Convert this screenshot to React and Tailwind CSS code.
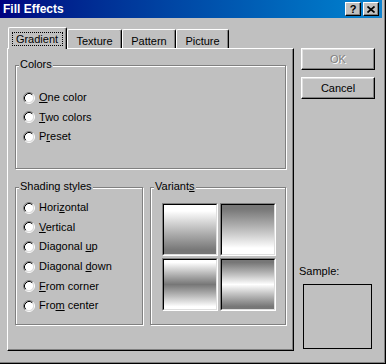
import React from 'react'

const Radio = ({ children }) => (
    <div className="flex items-center h-[19.6px]">
        <svg width="12" height="12" viewBox="0 0 12 12" className="shrink-0">
            <circle cx="6" cy="6" r="4.5" fill="#fff" />
            <path d="M2.11 9.89A5.5 5.5 0 0 1 9.89 2.11" fill="none" stroke="#808080" />
            <path d="M9.89 2.11A5.5 5.5 0 0 1 2.11 9.89" fill="none" stroke="#fff" />
            <path d="M2.82 9.18A4.5 4.5 0 0 1 9.18 2.82" fill="none" stroke="#000" />
            <path d="M9.18 2.82A4.5 4.5 0 0 1 2.82 9.18" fill="none" stroke="#dfdfdf" />
        </svg>
        <span className="ml-[4px] leading-[13px]">{children}</span>
    </div>
)

const Group = ({ label, className, children }) => (
    <div className={'relative border border-[#808080] shadow-[inset_1px_1px_0_#fff,1px_1px_0_#fff] ' + className}>
        <span className="absolute top-[-8px] left-[3px] bg-[#c0c0c0] px-[1px] leading-[13px]">{label}</span>
        {children}
    </div>
)

const Tab = ({ label, active, w }) => (
    <div
        className={
            active
                ? 'relative z-10 h-[22px] flex items-start justify-center pt-[4px] bg-[#c0c0c0] border-t border-l border-r border-t-white border-l-white border-r-black shadow-[inset_-1px_0_0_#808080] rounded-t-[2px]'
                : 'mt-[2px] h-[19px] flex items-start justify-center pt-[5px] bg-[#c0c0c0] border-t border-l border-r border-t-white border-l-white border-r-black shadow-[inset_-1px_0_0_#808080] rounded-t-[2px]'
        }
        style={{ width: w }}
    >
        {active ? (
            <span className="border border-dotted border-black pl-[3px] pr-[4px] leading-[12px]">{label}</span>
        ) : (
            <span className="leading-[12px]">{label}</span>
        )}
    </div>
)

const Tile = ({ grad }) => (
    <div className="w-[56px] h-[53px] border border-t-[#808080] border-l-[#808080] border-r-white border-b-white">
        <div className={'w-full h-full border border-t-black border-l-black border-r-[#dfdfdf] border-b-[#dfdfdf] ' + grad} />
    </div>
)

const WinButton = ({ children, disabled }) => (
    <button
        className={
            'w-[74px] h-[22px] bg-[#c0c0c0] border border-t-white border-l-white border-r-black border-b-black shadow-[inset_-1px_-1px_0_#808080,inset_1px_1px_0_#dfdfdf] leading-[13px] ' +
            (disabled ? 'text-[#808080] [text-shadow:1px_1px_0_#fff]' : 'text-black')
        }
    >
        {children}
    </button>
)

export default function App() {
    return (
        <div className="w-[386px] h-[364px] bg-[#c0c0c0] border-r border-b border-black shadow-[inset_-1px_-1px_0_#808080] font-['Liberation_Sans',Arial,sans-serif] text-[11px] text-black overflow-hidden select-none">
            {/* title bar */}
            <div className="w-[382px] h-[18px] flex items-center bg-linear-to-r from-[#000080] to-[#1084d0] pl-[3px] pr-[3px]">
                <span className="text-white font-bold text-[12px] leading-[14px]">Fill Effects</span>
                <div className="ml-auto flex gap-[2px]">
                    <div className="w-[16px] h-[14px] flex items-center justify-center bg-[#c0c0c0] border border-t-white border-l-white border-r-black border-b-black shadow-[inset_-1px_-1px_0_#808080]">
                        <span className="font-bold text-[11px] leading-[11px]">?</span>
                    </div>
                    <div className="w-[16px] h-[14px] flex items-center justify-center bg-[#c0c0c0] border border-t-white border-l-white border-r-black border-b-black shadow-[inset_-1px_-1px_0_#808080]">
                        <svg width="8" height="7" viewBox="0 0 8 7">
                            <path d="M0.5 0.5L7.5 6.5M7.5 0.5L0.5 6.5" stroke="#000" strokeWidth="1.7" />
                        </svg>
                    </div>
                </div>
            </div>

            <div className="flex pl-[7px] pt-[9px]">
                {/* left: tabs + panel */}
                <div className="w-[287px] flex flex-col">
                    <div className="h-[21px] flex items-start pl-[1px]">
                        <Tab label="Gradient" active w={59} />
                        <Tab label="Texture" w={55} />
                        <Tab label="Pattern" w={54} />
                        <Tab label="Picture" w={53} />
                    </div>
                    <div className="h-[303px] border border-t-white border-l-white border-r-black border-b-black shadow-[inset_-1px_-1px_0_#808080] pt-[16px] pl-[7px]">
                        <Group label="Colors" className="w-[271px] h-[104px] pt-[22px] pl-[7px]">
                            <Radio><span className="underline">O</span>ne color</Radio>
                            <Radio><span className="underline">T</span>wo colors</Radio>
                            <Radio>P<span className="underline">r</span>eset</Radio>
                        </Group>
                        <div className="flex gap-[7px] mt-[18px]">
                            <Group label="Shading styles" className="w-[128px] h-[138px] pt-[10px] pl-[7px]">
                                <Radio>Hori<span className="underline">z</span>ontal</Radio>
                                <Radio><span className="underline">V</span>ertical</Radio>
                                <Radio>Diagonal <span className="underline">u</span>p</Radio>
                                <Radio>Diagonal <span className="underline">d</span>own</Radio>
                                <Radio><span className="underline">F</span>rom corner</Radio>
                                <Radio>Fro<span className="underline">m</span> center</Radio>
                            </Group>
                            <Group label={<>Variant<span className="underline">s</span></>} className="w-[136px] h-[138px] pt-[15px] pl-[11px]">
                                <div className="grid grid-cols-[56px_56px] gap-[2px]">
                                    <Tile grad="bg-linear-to-b from-white from-[12%] to-[#777] to-[92%]" />
                                    <Tile grad="bg-linear-to-b from-[#777] from-[8%] to-white to-[88%]" />
                                    <Tile grad="bg-linear-to-b from-white from-[5%] via-[#777] to-white to-[95%]" />
                                    <Tile grad="bg-linear-to-b from-[#777] from-[5%] via-white to-[#777] to-[95%]" />
                                </div>
                            </Group>
                        </div>
                    </div>
                </div>

                {/* right: buttons + sample */}
                <div className="ml-[5px] flex flex-col">
                    <div className="ml-[2px] mt-[21px]">
                        <WinButton disabled>OK</WinButton>
                    </div>
                    <div className="ml-[2px] mt-[7px]">
                        <WinButton>Cancel</WinButton>
                    </div>
                    <div className="mt-[166px] leading-[13px]">Sample:</div>
                    <div className="ml-[4px] mt-[6px] w-[69px] h-[65px] border border-black" />
                </div>
            </div>
        </div>
    )
}
